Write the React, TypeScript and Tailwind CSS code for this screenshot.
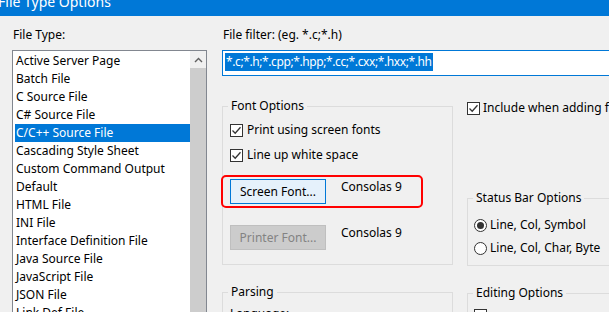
const fileTypes = [
  'Active Server Page',
  'Batch File',
  'C Source File',
  'C# Source File',
  'C/C++ Source File',
  'Cascading Style Sheet',
  'Custom Command Output',
  'Default',
  'HTML File',
  'INI File',
  'Interface Definition File',
  'Java Source File',
  'JavaScript File',
  'JSON File',
  'Link Def File',
  'Makefile',
]

function CheckBox({ checked = true }: { checked?: boolean }) {
  return (
    <span className="w-[13px] h-[13px] border border-[#333333] bg-white flex items-center justify-center shrink-0">
      {checked && (
        <svg width="11" height="11" viewBox="0 0 11 11">
          <path d="M1.5 5.5 L4.2 8.2 L9.5 2.2" fill="none" stroke="#333333" strokeWidth="1.3" />
        </svg>
      )}
    </span>
  )
}

function Radio({ checked }: { checked?: boolean }) {
  return (
    <span className="w-[13px] h-[13px] rounded-full border border-[#333333] bg-white flex items-center justify-center shrink-0">
      {checked && <span className="w-[7px] h-[7px] rounded-full bg-[#333333]" />}
    </span>
  )
}

// group box: border only on the fieldset, padding goes on the inner div so the legend stays put
function Group({
  title,
  className,
  inner,
  children,
}: {
  title: string
  className?: string
  inner?: string
  children?: React.ReactNode
}) {
  return (
    <fieldset className={`border border-[#dcdcdc] ${className ?? ''}`}>
      <legend className="ml-[5px] px-[3px] h-[16px] leading-[16px] whitespace-nowrap">{title}</legend>
      <div className={inner}>{children}</div>
    </fieldset>
  )
}

export default function App() {
  const selected = 4

  return (
    <div className="relative w-[609px] h-[312px] overflow-hidden bg-[#f0f0f0] text-[12px] leading-[16px] text-black font-['Noto_Sans',sans-serif]">
      <div className="h-[16px] bg-[#0078d7] overflow-hidden">
        <div className="-mt-[7px] -ml-[2px] text-white text-[14px] leading-[18px] whitespace-nowrap">File Type Options</div>
      </div>

      <div className="flex pl-[12px] pt-[10px]">
        {/* file type list */}
        <div className="w-[195px] shrink-0">
          <div className="pl-[1px] h-[18px] leading-[18px]">File Type:</div>
          <div className="mt-[6px] h-[300px] border border-[#828790] bg-white flex">
            <div className="flex-1 pt-[1px] pl-[2px] overflow-hidden">
              {fileTypes.map((t, i) => (
                <div
                  key={t}
                  className={`h-[18px] leading-[18px] px-[1px] whitespace-nowrap ${i === selected ? 'bg-[#0078d7] text-white' : ''}`}
                >
                  {t}
                </div>
              ))}
            </div>
            <div className="w-[16px] flex flex-col bg-[#f0f0f0]">
              <div className="h-[17px] flex items-center justify-center">
                <svg width="9" height="6" viewBox="0 0 9 6">
                  <path d="M1 5 L4.5 1.5 L8 5" fill="none" stroke="#606060" strokeWidth="1.4" />
                </svg>
              </div>
              <div className="flex-1 bg-[#cdcdcd]" />
            </div>
          </div>
        </div>

        {/* right side */}
        <div className="ml-[15px] flex-1 min-w-0">
          <div className="pl-[1px] h-[18px] leading-[18px] whitespace-nowrap">File filter: (eg. *.c;*.h)</div>
          <div className="mt-[6px] h-[26px] w-[420px] border border-[#0078d7] bg-white pl-[2px] pt-[2px]">
            <span className="inline-block h-[18px] leading-[18px] px-[1px] bg-[#0078d7] text-white whitespace-nowrap tracking-[-0.4px]">
              *.c;*.h;*.cpp;*.hpp;*.cc;*.cxx;*.hxx;*.hh
            </span>
          </div>

          <div className="flex mt-[22px]">
            <div className="w-[231px] shrink-0">
              <Group title="Font Options" inner="pl-[7px] pb-[14px]">
                <label className="mt-[7px] h-[18px] flex items-center gap-[4px] whitespace-nowrap">
                  <CheckBox />
                  Print using screen fonts
                </label>
                <label className="mt-[7px] h-[18px] flex items-center gap-[4px] whitespace-nowrap">
                  <CheckBox />
                  Line up white space
                </label>
                <div className="mt-[15px] flex items-start">
                  <button className="w-[96px] h-[25px] border border-[#0078d7] bg-[#e5f1fb] leading-[22px]">Screen Font...</button>
                  <span className="ml-[15px] whitespace-nowrap">Consolas 9</span>
                </div>
                <div className="mt-[21px] flex items-start">
                  <button className="w-[96px] h-[25px] border border-[#bfbfbf] bg-[#cccccc] text-[#838383] leading-[22px]">Printer Font...</button>
                  <span className="ml-[15px] whitespace-nowrap">Consolas 9</span>
                </div>
              </Group>
              <Group title="Parsing" className="mt-[19px] h-[60px]" inner="pl-[7px]">
                <div className="mt-[6px] whitespace-nowrap">Language:</div>
              </Group>
            </div>

            <div className="ml-[14px] w-[200px] shrink-0">
              <label className="mt-[2px] h-[16px] flex items-center gap-[3px] whitespace-nowrap">
                <CheckBox />
                Include when adding files
              </label>
              <Group title="Status Bar Options" className="mt-[74px] w-[200px]" inner="pl-[6px] pb-[8px]">
                <label className="mt-[10px] h-[18px] flex items-center gap-[3px] whitespace-nowrap">
                  <Radio checked />
                  Line, Col, Symbol
                </label>
                <label className="mt-[5px] h-[18px] flex items-center gap-[3px] whitespace-nowrap">
                  <Radio />
                  Line, Col, Char, Byte
                </label>
              </Group>
              <Group title="Editing Options" className="mt-[19px] h-[60px] w-[200px]" inner="pl-[6px]">
                <div className="mt-[8px]">
                  <CheckBox checked={false} />
                </div>
              </Group>
            </div>
          </div>
        </div>
      </div>

      {/* red annotation */}
      <div className="absolute left-[221px] top-[175px] w-[202px] h-[33px] border-2 border-[#ff0000] rounded-[5px] pointer-events-none" />
    </div>
  )
}
